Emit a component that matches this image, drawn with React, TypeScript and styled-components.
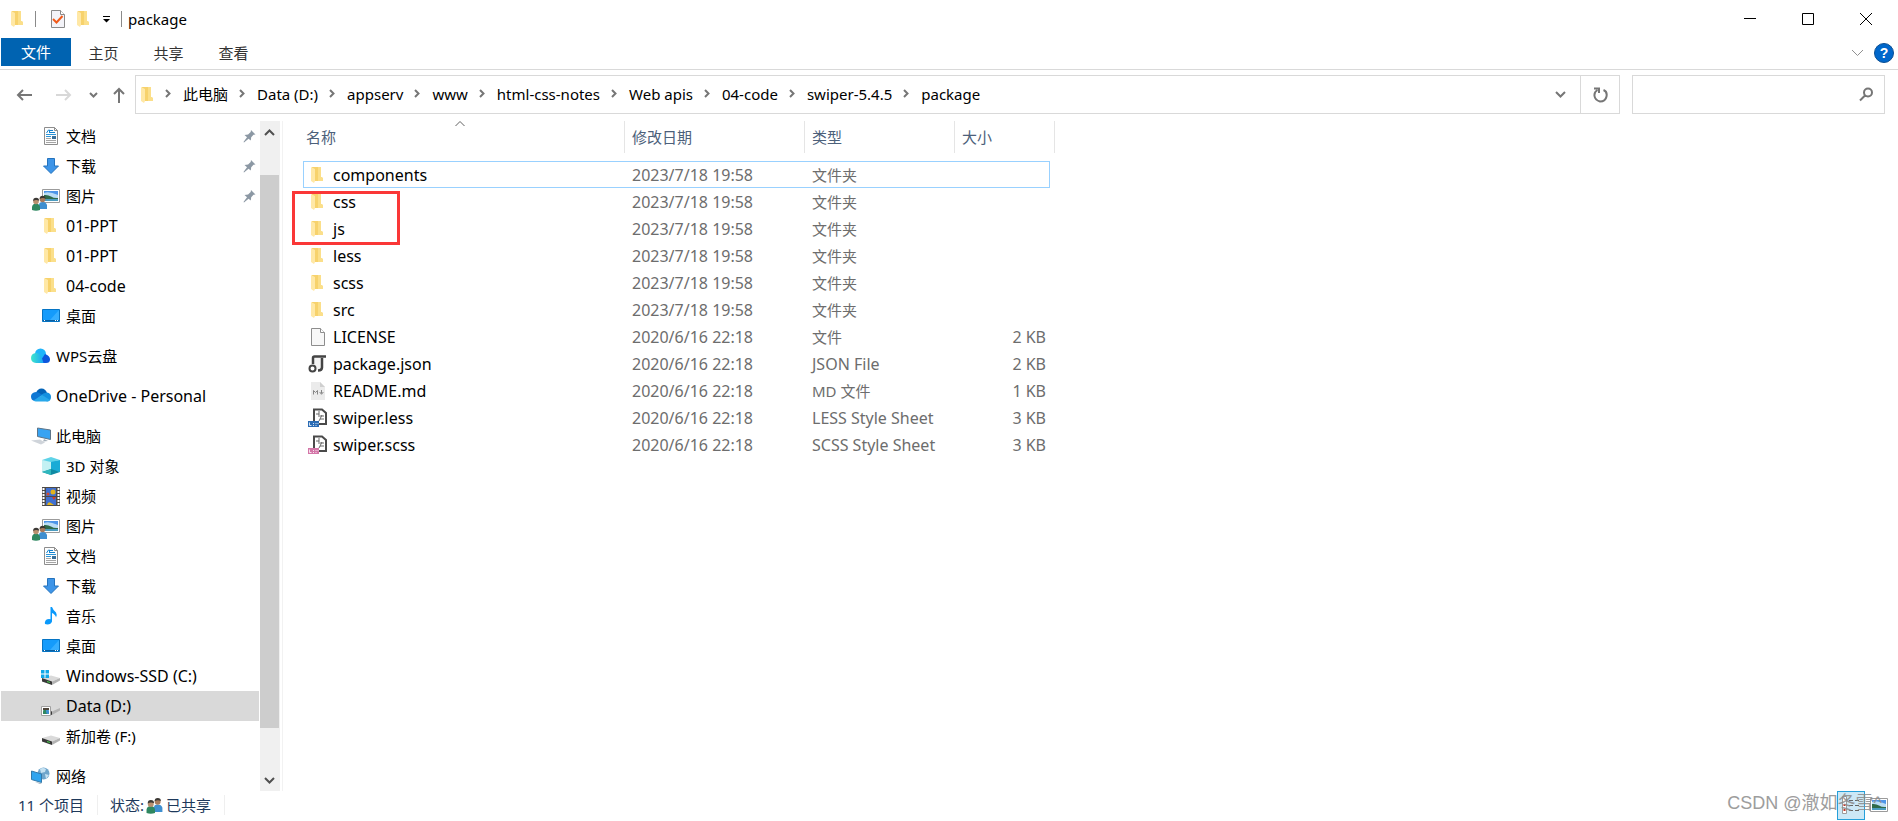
import React from 'react';
import styled, { createGlobalStyle, css } from 'styled-components';

const Global = createGlobalStyle`
  *, *::before, *::after { box-sizing: border-box; }
  html, body, #root { height: 100%; }
  body {
    margin: 0;
    background: #fff;
    color: #000;
    font: 15px/20px "Noto Sans", "Noto Sans CJK SC", sans-serif;
  }
  button, input {
    margin: 0;
    padding: 0;
    border: 0;
    background: none;
    font: inherit;
    color: inherit;
  }
  a { color: inherit; text-decoration: none; }
`;

const Window = styled.div`
  display: flex;
  flex-direction: column;
  height: 100vh;
  min-height: 480px;
  overflow: hidden;
`;

const TitleBar = styled.header`
  display: flex;
  align-items: center;
  height: 38px;
  padding-left: 8px;
`;

const QuickTools = styled.div`
  display: flex;
  align-items: center;
  gap: 6px;
`;

const QuickButton = styled.button<{ $narrow?: boolean }>`
  display: flex;
  align-items: center;
  justify-content: center;
  width: ${p => (p.$narrow ? 14 : 20)}px;
  height: 24px;
`;

const Rule = styled.span`
  width: 1px;
  height: 16px;
  margin: 0 6px 0 1px;
  background: #8a8a8a;
`;

const Title = styled.h1`
  flex: 1;
  margin: 0;
  font-size: 15px;
  font-weight: 400;
  line-height: 20px;
`;

const Caption = styled.button`
  display: flex;
  align-items: center;
  justify-content: center;
  width: 58px;
  height: 38px;
`;

const Captions = styled.div`
  display: flex;
  padding-right: 3px;
`;

const Ribbon = styled.nav`
  display: flex;
  align-items: flex-start;
  height: 32px;
  padding-left: 1px;
  border-bottom: 1px solid #d9d9d9;
`;

const RibbonTab = styled.button<{ $active?: boolean }>`
  height: 28px;
  width: 65px;
  padding-top: 2px;
  color: #333;
  ${p => p.$active && css`
    width: 70px;
    padding-top: 0;
    color: #fff;
    background: #0063b1;
  `}
`;

const RibbonEnd = styled.div`
  display: flex;
  align-items: center;
  gap: 10px;
  height: 30px;
  margin-left: auto;
  padding-right: 4px;
  & button { display: flex; }
`;

const AddressRow = styled.div`
  display: flex;
  align-items: center;
  height: 49px;
  padding: 0 13px 0 16px;
`;

const NavButtons = styled.div`
  display: flex;
  align-items: center;
  width: 119px;
`;

const NavButton = styled.button<{ $w: number }>`
  display: flex;
  align-items: center;
  width: ${p => p.$w}px;
  height: 24px;
`;

const AddressBox = styled.div`
  display: flex;
  flex: 1;
  align-items: center;
  height: 39px;
  border: 1px solid #d9d9d9;
  padding-left: 4px;
`;

const Crumbs = styled.ol`
  display: flex;
  flex: 1;
  align-items: center;
  margin: 0;
  padding: 0 0 2px;
  list-style: none;
  white-space: nowrap;
`;

const Crumb = styled.li`
  display: flex;
  align-items: center;
  & svg { margin: 0 12px 0 11px; }
`;

const BoxButton = styled.button<{ $ruled?: boolean }>`
  display: flex;
  align-items: center;
  justify-content: center;
  width: 39px;
  height: 37px;
  border-left: ${p => (p.$ruled ? '1px solid #d9d9d9' : '0')};
`;

const SearchBox = styled.label`
  display: flex;
  align-items: center;
  width: 253px;
  height: 39px;
  margin-left: 12px;
  padding: 0 10px;
  border: 1px solid #d9d9d9;
  & input { flex: 1; min-width: 0; outline: none; }
`;

const Body = styled.div`
  display: flex;
  flex: 1;
  min-height: 0;
  padding-top: 2px;
`;

const Sidebar = styled.nav`
  flex: none;
  width: 259px;
  padding-left: 1px;
  overflow: hidden;
`;

const Group = styled.ul`
  margin: 0 0 10px;
  padding: 0;
  list-style: none;
`;

const TreeItem = styled.a<{ $selected?: boolean }>`
  display: flex;
  align-items: center;
  height: 30px;
  padding: 0 3px 0 30px;
  background: ${p => (p.$selected ? '#d9d9d9' : 'transparent')};
`;

const TreeIcon = styled.span<{ $depth: number }>`
  display: flex;
  justify-content: flex-end;
  width: ${p => (p.$depth ? 29 : 20)}px;
  margin-right: ${p => (p.$depth ? 6 : 5)}px;
`;

const TreeLabel = styled.span<{ $latin: boolean }>`
  flex: 1;
  font-size: ${p => (p.$latin ? 16 : 15)}px;
  white-space: nowrap;
`;

const Scrollbar = styled.div`
  display: flex;
  flex: none;
  flex-direction: column;
  width: 20px;
  margin-left: 1px;
  background: #f0f0f0;
`;

const ScrollButton = styled.button`
  display: flex;
  align-items: center;
  justify-content: center;
  width: 19px;
  height: 22px;
`;

const Track = styled.div`
  flex: 1;
  padding: 32px 1px 41px 0;
`;

const Thumb = styled.div`
  height: 100%;
  background: #cdcdcd;
`;

const Content = styled.main`
  flex: 1;
  position: relative;
  margin-left: 2px;
  padding-left: 20px;
  border-left: 1px solid #f2f2f2;
  overflow: hidden;
`;

const FileTable = styled.table`
  width: 752px;
  table-layout: fixed;
  border-collapse: separate;
  border-spacing: 0;
  white-space: nowrap;
`;

const Column = styled.col<{ $w: number }>`
  width: ${p => p.$w}px;
`;

const HeadCell = styled.th`
  position: relative;
  height: 32px;
  padding: 0 7px;
  border-right: 1px solid #e5e5e5;
  color: #4c607a;
  font-weight: 400;
  text-align: left;
  &:first-child { padding-left: 3px; }
`;

const SortMark = styled.span`
  position: absolute;
  top: 0;
  left: 49%;
  display: flex;
  transform: translateX(-50%);
`;

const HeadGap = styled.tbody`
  & td { height: 8px; padding: 0; }
`;

const FileRow = styled.tr<{ $focused?: boolean }>`
  height: 27px;
  & td { border: 0 solid transparent; }
  & td:first-child { border-left-width: 1px; }
  ${p => p.$focused && css`
    & td { border-color: #99d1ff; border-width: 1px 0; }
    & td:nth-child(4) { border-right-width: 1px; }
    & td:last-child { border-width: 0; }
  `}
`;

const Cell = styled.td<{ $num?: boolean; $latin?: boolean }>`
  height: 27px;
  padding: 0 ${p => (p.$num ? 4 : 7)}px;
  color: #6d6d6d;
  font-size: ${p => (p.$latin ? 16 : 15)}px;
  text-align: ${p => (p.$num ? 'right' : 'left')};
`;

const NameCell = styled(Cell)`
  padding: 0 0 0 3px;
  color: #000;
  & a { display: flex; align-items: center; gap: 6px; }
`;

const Gutter = styled.td`
  padding: 0;
`;

const Highlight = styled.div`
  position: absolute;
  top: 70px;
  left: 9px;
  width: 108px;
  height: 54px;
  border: 3px solid #fa3737;
`;

const FileIconSlot = styled.span`
  display: flex;
  width: 20px;
  justify-content: flex-end;
`;

const StatusBar = styled.footer`
  position: relative;
  display: flex;
  align-items: center;
  height: 30px;
  padding: 0 10px 2px 18px;
  color: #1e395b;
`;

const StatusPart = styled.span`
  display: flex;
  align-items: center;
  padding-right: 13px;
  margin-right: 12px;
  border-right: 1px solid #efefef;
`;

const Views = styled.div`
  display: flex;
  align-items: center;
  margin-left: auto;
  gap: 5px;
`;

const ViewButton = styled.button<{ $on?: boolean }>`
  display: flex;
  align-items: center;
  justify-content: center;
  ${p => p.$on && css`
    width: 28px;
    height: 29px;
    border: 1px solid #26a0da;
    background: #cce8f6;
  `}
`;

const Watermark = styled.span`
  position: absolute;
  right: 16px;
  bottom: 6px;
  color: #8c8c8c;
  font: 18px/24px "Liberation Sans", "Noto Sans CJK SC", sans-serif;
  opacity: 0.85;
`;

const Folder = ({ compact }: { compact?: boolean }) => (
  <svg width={compact ? 14 : 18} height="18" viewBox={compact ? '0 0 14 18' : '-1 0 18 18'} aria-hidden>
    <path d="M2 1h9v10l2 1v3H2z" fill="#f7d26c" />
    <path d="M8 1h3v10l2 1v3H8z" fill="#fbdf8a" />
    <path d="M1 1l4 2v12l-1 2-3-2z" fill="#ffe8a6" />
  </svg>
);

const Page = () => (
  <svg width="18" height="18" viewBox="-1 0 18 18" aria-hidden>
    <path d="M1.500 .5h9l4 4v13h-13z" fill="#f7f7f7" stroke="#8d8d8d" />
    <path d="M10.500 .5v4h4" fill="#fff" stroke="#8d8d8d" />
  </svg>
);

const Checked = () => (
  <svg width="16" height="18" viewBox="0 0 16 18" aria-hidden>
    <path d="M1.500 .5h9l4 4v13h-13z" fill="#f3f3f8" stroke="#8a8a8a" />
    <path d="M10.500 .5v4h4" fill="#fff" stroke="#8a8a8a" />
    <path d="M3 9l3.500 3.500L12.500 6" fill="none" stroke="#f05a1a" strokeWidth="2" />
  </svg>
);

const Doc = () => (
  <svg width="18" height="18" viewBox="-1 0 18 18" aria-hidden>
    <path d="M1.500 .5h10l3 3v14h-13z" fill="#fdfdfd" stroke="#8d8d8d" />
    <path d="M11.500 .5v3h3" fill="none" stroke="#8d8d8d" />
    <path d="M3.500 6L5.500 3h1v3M7 3.500h3M7 5.500h5" fill="none" stroke="#1583cf" />
    <path d="M3 7.500h10M3 9.500h5" stroke="#2a94d8" />
    <path d="M3 11.500h5M3 13.500h10M3 15.500h10" stroke="#a5a5a5" />
    <path d="M9 9h4v3H9z" fill="#3a6f9a" />
  </svg>
);

const Download = () => (
  <svg width="18" height="18" viewBox="0 0 18 18" aria-hidden>
    <path d="M5.500 1.500h7V9h4L9 16.500 1.500 9h4z" fill="#3e95e8" stroke="#2473bd" />
  </svg>
);

const People = () => (
  <>
    <path d="M7 20v-4q0-3 3.500-3t4.500 3v4z" fill="#3f8fd0" />
    <circle cx="10.500" cy="10.500" r="2.800" fill="#a87b5c" />
    <path d="M7.600 10q0-3.200 3-3.200t3 3q-3-1.500-6 .2z" fill="#3c3935" />
    <path d="M0 21v-3q.5-3.500 4-3.500t4 3.500v3q-4 1.500-8 0z" fill="#2f8760" />
    <circle cx="4" cy="12.500" r="2.800" fill="#b9906f" />
    <path d="M1.100 12q0-3.200 3-3.200t3 3q-3-1.500-6 .2z" fill="#3c3935" />
  </>
);

const Photo = () => (
  <>
    <path d="M.5.5h17v13H.5z" fill="#fff" stroke="#9b9b9b" />
    <path d="M2 2h14v10H2z" fill="#4c95e8" />
    <path d="M2 4q5-2 14 2v3H2z" fill="#b9dcf5" />
    <path d="M2 6q4-.5 7 1.500t7 1.500v1H2z" fill="#2f6b4a" />
    <path d="M2 10h14v2H2z" fill="#4b9cc0" />
  </>
);

const Pictures = () => (
  <svg width="29" height="30" viewBox="0 -8 29 30" aria-hidden>
    <g transform="translate(11 0)"><Photo /></g>
    <g transform="translate(1 0)"><People /></g>
  </svg>
);

const Desktop = () => (
  <svg width="18" height="14" viewBox="0 0 18 14" aria-hidden>
    <path d="M.5.5h17v12H.5z" fill="#149bfb" stroke="#0574c4" />
    <path d="M1 11.500h16" stroke="#0b5e9f" />
    <path d="M2 11.500h1M13 11.500h1M15 11.500h1" stroke="#fff" />
    <path d="M17 1v10L8 11z" fill="#35aeff" />
  </svg>
);

const WpsCloud = () => (
  <svg width="20" height="16" viewBox="0 0 20 16" aria-hidden>
    <defs>
      <linearGradient id="wps-left" x1="0" y1="0" x2="1" y2="0">
        <stop offset="0" stopColor="#3fe6cc" />
        <stop offset="1" stopColor="#1aa5f6" />
      </linearGradient>
    </defs>
    <circle cx="9.500" cy="6" r="5.500" fill="#1fb4fa" />
    <path d="M8 15l6-9q5 1.500 5 5.500 0 3.500-4 3.500z" fill="#0d56dc" />
    <path d="M5 5q4 0 5.500 4l2 6H5q-5-.5-5-5t5-5z" fill="url(#wps-left)" />
  </svg>
);

const OneDrive = () => (
  <svg width="20" height="16" viewBox="0 0 20 16" aria-hidden>
    <path d="M5 5q1.500-4.500 5.500-4.500T16 5l-4 4z" fill="#0364b8" />
    <path d="M5 4q3 0 6 3l-7 6Q0 12.500 0 8.500T5 4z" fill="#0f78d4" />
    <path d="M10 7q3-2.500 6-2.500 4 .5 4 4.500t-4 4.500l-5-3z" fill="#1490df" />
    <path d="M2.500 12.500L11 7l8 5q-1 1.500-3 1.500H5q-1.500 0-2.500-1z" fill="#28a8ea" />
  </svg>
);

const Computer = () => (
  <svg width="20" height="18" viewBox="0 0 20 18" aria-hidden>
    <path d="M6.500 1l13 2v9.500l-13-3z" fill="#38a3f2" stroke="#5d7488" />
    <path d="M13 12l-1 2.500 5-.5" fill="#a5b0ba" />
    <path d="M0 13.500l9-1 5 3-4 2z" fill="#cfd4da" />
  </svg>
);

const Cube = () => (
  <svg width="18" height="18" viewBox="0 0 18 18" aria-hidden>
    <path d="M0 3l9 1v10l-9 1z" fill="#c3f1f3" />
    <path d="M18 3L9 4v10l9 1z" fill="#1aabd6" />
    <path d="M9 0l9 3-9 2-9-2z" fill="#5fd3e8" />
    <path d="M0 15l9-3 9 3-9 3z" fill="#0f8aa3" />
    <path d="M0 15l9-3v6z" fill="#2fb7bd" />
  </svg>
);

const Film = () => (
  <svg width="18" height="19" viewBox="0 0 18 19" aria-hidden>
    <path d="M0 0h18v19H0z" fill="#4c4947" />
    <path d="M1.500 1v18M16.500 1v18" stroke="#fff" strokeWidth="2" strokeDasharray="2 1" />
    <path d="M4 1h10v8H4zM4 10h10v8H4z" fill="#3f6fd0" />
    <circle cx="11" cy="5" r="2.500" fill="#e2b21c" />
    <circle cx="6" cy="7" r="1.500" fill="#d84a2b" />
    <path d="M10 10h4l-2 3z" fill="#d33b22" />
    <path d="M5 18q1-4 4-2l3 2z" fill="#e2b21c" />
  </svg>
);

const Note = () => (
  <svg width="18" height="18" viewBox="-2 0 18 18" aria-hidden>
    <path d="M6.500 0h1.500q1 3 4 5.500 1.500 2.500 0 5-.5-3-4-4.500v8.500q-1 3-4.500 3T1 15q.5-3 4-3l1.500.2z" fill="#0a99fb" />
  </svg>
);

const DiskBody = () => (
  <>
    <path d="M0 12l9-2.500 9 2.500-8 3.500z" fill="#dadada" />
    <path d="M0 12l10 3.500V19L0 15.500z" fill="#393939" />
    <path d="M10 15.500l8-3.500v2.500L10 19z" fill="#b3b3b3" />
    <path d="M5 15.500l3 1" stroke="#45d34a" />
  </>
);

const Disk = ({ kind }: { kind: 'windows' | 'shared' | 'plain' }) => (
  <svg width="20" height="20" viewBox="0 0 20 20" aria-hidden>
    <g transform="translate(2 0)"><DiskBody /></g>
    {kind === 'windows' && (
      <path d="M1 4h3.500v3.500H1zM5.500 4H9v3.500H5.500zM1 8.500h3.500V12H1zM5.500 8.500H9V12H5.500z" fill="#10a8e8" />
    )}
    {kind === 'shared' && (
      <>
        <path d="M1.500 10.500h9v9h-9z" fill="#fff" stroke="#a0a0a0" />
        <path d="M3 16q0-3 2-3t2 3v2H3z" fill="#2f8760" />
        <path d="M6 16q0-3 1.500-3T9 16v2H7z" fill="#3f8fd0" />
        <path d="M3 12h6v2H3z" fill="#4f463c" />
      </>
    )}
  </svg>
);

const Network = () => (
  <svg width="20" height="18" viewBox="0 0 20 18" aria-hidden>
    <circle cx="12.500" cy="6.500" r="6" fill="#6fa5cb" />
    <path d="M9 2q3-2 6 0l-1 3-4 1zM14 7l4 1-3 4z" fill="#c6e2f2" />
    <path d="M.5 4l10 3v8.500l-10-3z" fill="#2fa4ef" stroke="#3279aa" />
    <path d="M4 15l5 2 2-1z" fill="#9db0be" />
  </svg>
);

const Pin = () => (
  <svg width="13" height="14" viewBox="0 0 13 14" aria-hidden>
    <path d="M8 1l4.500 4.500-2 .2-2.300 2.500-.4 3.300L5.500 9.700 1 13.500l-.5-.5L4 8.200 1.500 6l3.600-.4L7.700 3z" fill="#8c98a4" />
  </svg>
);

const JsonIcon = () => (
  <svg width="19" height="18" viewBox="0 0 19 18" aria-hidden>
    <path d="M5.500 1h8v14h-8z" fill="#f4f4f4" />
    <path d="M5 9V3q0-1.500 1.500-1.500H18" fill="none" stroke="#444" strokeWidth="2.500" />
    <path d="M14 3v9.500q0 3-4 3" fill="none" stroke="#444" strokeWidth="2.500" />
    <circle cx="4.500" cy="13.500" r="3" fill="#fff" stroke="#444" strokeWidth="2" />
  </svg>
);

const glyphFont = '"Liberation Sans", sans-serif';

const MdIcon = () => (
  <svg width="18" height="18" viewBox="-1 0 18 18" aria-hidden>
    <path d="M1 0h9l5 5v13H1z" fill="#ebebeb" />
    <path d="M10 0v5h5z" fill="#cfcfcf" />
    <path d="M3.500 12.500V8.500l2 2 2-2v4M11.500 8v3.500M9.700 10l1.800 2.300 1.800-2.300" fill="none" stroke="#858585" />
  </svg>
);

const SheetIcon = ({ tint }: { tint: string }) => (
  <svg width="20" height="20" viewBox="0 0 20 20" aria-hidden>
    <path d="M7 13V1.500h8L19 5v11h-7" fill="#fff" stroke="#4a4a4a" strokeWidth="2" />
    <path d="M9 6h3M12 3v6M13 8h4M13 11h4M12 13l3-6" stroke="#6a6a6a" />
    <path d="M1 13h11v6H1z" fill={tint} />
    <path d="M2.500 14.500v3h2M6 15.500h1M6 17.500h1M8.500 15.500h1M8.500 17.500h1M10.500 15.500h1" fill="none" stroke="#fff" strokeOpacity=".8" />
  </svg>
);

const Arrow = ({ d, tone, w = 16, h = 16, sw = 2 }: { d: string; tone: string; w?: number; h?: number; sw?: number }) => (
  <svg width={w} height={h} viewBox={`0 0 ${w} ${h}`} fill="none" stroke={tone} strokeWidth={sw} aria-hidden>
    <path d={d} />
  </svg>
);

type Node = { label: string; icon: React.ReactNode; depth?: number; pinned?: boolean; selected?: boolean };

const tree: Node[][] = [
  [
    { label: '文档', icon: <Doc />, depth: 1, pinned: true },
    { label: '下载', icon: <Download />, depth: 1, pinned: true },
    { label: '图片', icon: <Pictures />, depth: 1, pinned: true },
    { label: '01-PPT', icon: <Folder />, depth: 1 },
    { label: '01-PPT', icon: <Folder />, depth: 1 },
    { label: '04-code', icon: <Folder />, depth: 1 },
    { label: '桌面', icon: <Desktop />, depth: 1 },
  ],
  [{ label: 'WPS云盘', icon: <WpsCloud /> }],
  [{ label: 'OneDrive - Personal', icon: <OneDrive /> }],
  [
    { label: '此电脑', icon: <Computer /> },
    { label: '3D 对象', icon: <Cube />, depth: 1 },
    { label: '视频', icon: <Film />, depth: 1 },
    { label: '图片', icon: <Pictures />, depth: 1 },
    { label: '文档', icon: <Doc />, depth: 1 },
    { label: '下载', icon: <Download />, depth: 1 },
    { label: '音乐', icon: <Note />, depth: 1 },
    { label: '桌面', icon: <Desktop />, depth: 1 },
    { label: 'Windows-SSD (C:)', icon: <Disk kind="windows" />, depth: 1 },
    { label: 'Data (D:)', icon: <Disk kind="shared" />, depth: 1, selected: true },
    { label: '新加卷 (F:)', icon: <Disk kind="plain" />, depth: 1 },
  ],
  [{ label: '网络', icon: <Network /> }],
];

const folders = ['components', 'css', 'js', 'less', 'scss', 'src'];
const files = [
  ...folders.map(name => ({ name, icon: <Folder />, date: '2023/7/18 19:58', type: '文件夹', size: '' })),
  { name: 'LICENSE', icon: <Page />, date: '2020/6/16 22:18', type: '文件', size: '2 KB' },
  { name: 'package.json', icon: <JsonIcon />, date: '2020/6/16 22:18', type: 'JSON File', size: '2 KB' },
  { name: 'README.md', icon: <MdIcon />, date: '2020/6/16 22:18', type: 'MD 文件', size: '1 KB' },
  { name: 'swiper.less', icon: <SheetIcon tint="#2b6cb5" />, date: '2020/6/16 22:18', type: 'LESS Style Sheet', size: '3 KB' },
  { name: 'swiper.scss', icon: <SheetIcon tint="#d476a8" />, date: '2020/6/16 22:18', type: 'SCSS Style Sheet', size: '3 KB' },
];

const path = ['此电脑', 'Data (D:)', 'appserv', 'www', 'html-css-notes', 'Web apis', '04-code', 'swiper-5.4.5', 'package'];

// Latin-only strings are set one size up so they balance with the Chinese labels.
const isLatin = (text: string) => /^[\x20-\x7e]*$/.test(text);

export default function App() {
  return (
    <Window>
      <Global />
      <TitleBar>
        <QuickTools>
          <QuickButton aria-label="Window menu"><Folder /></QuickButton>
          <Rule />
          <QuickButton aria-label="Properties"><Checked /></QuickButton>
          <QuickButton aria-label="New folder"><Folder /></QuickButton>
          <QuickButton $narrow aria-label="Customize toolbar">
            <svg width="8" height="8" viewBox="0 0 8 8" aria-hidden>
              <path d="M0 1.500h7" stroke="#000" strokeWidth="1" />
              <path d="M0 4h7L3.500 7.500z" fill="#000" />
            </svg>
          </QuickButton>
          <Rule />
        </QuickTools>
        <Title>package</Title>
        <Captions>
          <Caption aria-label="Minimize"><Arrow d="M0 5.500h12" tone="#000" w={12} h={12} sw={1} /></Caption>
          <Caption aria-label="Maximize"><Arrow d="M.5.5h11v11H.5z" tone="#000" w={12} h={12} sw={1} /></Caption>
          <Caption aria-label="Close"><Arrow d="M0 0l12 12M12 0L0 12" tone="#000" w={12} h={12} sw={1} /></Caption>
        </Captions>
      </TitleBar>

      <Ribbon>
        <RibbonTab $active>文件</RibbonTab>
        <RibbonTab>主页</RibbonTab>
        <RibbonTab>共享</RibbonTab>
        <RibbonTab>查看</RibbonTab>
        <RibbonEnd>
          <button aria-label="Expand ribbon"><Arrow d="M1 1l5.500 5.500L12 1" tone="#909090" w={13} h={8} sw={1} /></button>
          <button aria-label="Help">
            <svg width="20" height="20" viewBox="0 0 20 20" aria-hidden>
              <circle cx="10" cy="10" r="9.500" fill="#0067cb" stroke="#0b4f93" />
              <text x="10" y="15" textAnchor="middle" fill="#fff" fontSize="14" fontWeight="700" fontFamily={glyphFont}>?</text>
            </svg>
          </button>
        </RibbonEnd>
      </Ribbon>

      <AddressRow>
        <NavButtons>
          <NavButton $w={40} aria-label="Back"><Arrow d="M16 8H2M7 3L2 8l5 5" tone="#767676" /></NavButton>
          <NavButton $w={33} aria-label="Forward"><Arrow d="M0 8h14M9 3l5 5-5 5" tone="#d8d8d8" /></NavButton>
          <NavButton $w={24} aria-label="Recent"><Arrow d="M1 1l3.500 3.500L8 1" tone="#767676" w={9} h={6} /></NavButton>
          <NavButton $w={16} aria-label="Up"><Arrow d="M6 16V2M1 7l5-5 5 5" tone="#767676" w={12} /></NavButton>
        </NavButtons>
        <AddressBox>
          <Folder compact />
          <Crumbs>
            {path.map(part => (
              <Crumb key={part}>
                <Arrow d="M1 1l3.500 3.500L1 8" tone="#767676" w={6} h={9} />
                <a href="#">{part}</a>
              </Crumb>
            ))}
          </Crumbs>
          <BoxButton aria-label="Previous locations"><Arrow d="M1 1l4.500 4.500L10 1" tone="#767676" w={11} h={7} /></BoxButton>
          <BoxButton $ruled aria-label="Refresh"><Arrow d="M4.500 3q-3.500 2-3 6t5.500 5.500q5.500 0 6.500-5t-3-6.500M1 1.500h5V6" tone="#767676" w={15} /></BoxButton>
        </AddressBox>
        <SearchBox>
          <input type="search" aria-label="Search" />
          <Arrow d="M13 5.500a4 4 0 1 0-8 0 4 4 0 1 0 8 0M6 8.500L1 13.500" tone="#767676" w={15} h={15} />
        </SearchBox>
      </AddressRow>

      <Body>
        <Sidebar>
          {tree.map((group, i) => (
            <Group key={i}>
              {group.map((n, j) => (
                <li key={j}>
                  <TreeItem href="#" $selected={n.selected}>
                    <TreeIcon $depth={n.depth ?? 0}>{n.icon}</TreeIcon>
                    <TreeLabel $latin={isLatin(n.label)}>{n.label}</TreeLabel>
                    {n.pinned && <Pin />}
                  </TreeItem>
                </li>
              ))}
            </Group>
          ))}
        </Sidebar>
        <Scrollbar>
          <ScrollButton aria-label="Scroll up"><Arrow d="M1 6l4.500-4.500L10 6" tone="#505050" w={11} h={7} /></ScrollButton>
          <Track><Thumb /></Track>
          <ScrollButton aria-label="Scroll down"><Arrow d="M1 1l4.500 4.500L10 1" tone="#505050" w={11} h={7} /></ScrollButton>
        </Scrollbar>
        <Content>
          <FileTable>
            <colgroup>
              <Column $w={322} />
              <Column $w={180} />
              <Column $w={150} />
              <Column $w={95} />
              <Column $w={5} />
            </colgroup>
            <thead>
              <tr>
                <HeadCell>名称<SortMark><Arrow d="M.5 5L5 .5 9.500 5" tone="#606060" w={10} h={6} sw={1} /></SortMark></HeadCell>
                <HeadCell>修改日期</HeadCell>
                <HeadCell>类型</HeadCell>
                <HeadCell colSpan={2}>大小</HeadCell>
              </tr>
            </thead>
            <HeadGap><tr><td colSpan={5} /></tr></HeadGap>
            <tbody>
              {files.map((f, i) => (
                <FileRow key={f.name} $focused={i === 0}>
                  <NameCell $latin><a href="#"><FileIconSlot>{f.icon}</FileIconSlot>{f.name}</a></NameCell>
                  <Cell $latin>{f.date}</Cell>
                  <Cell $latin={isLatin(f.type)}>{f.type}</Cell>
                  <Cell $num $latin>{f.size}</Cell>
                  <Gutter />
                </FileRow>
              ))}
            </tbody>
          </FileTable>
          <Highlight />
        </Content>
      </Body>

      <StatusBar>
        <StatusPart>11 个项目</StatusPart>
        <StatusPart>
          状态:
          <svg width="22" height="18" viewBox="-2 5 20 17" aria-hidden><People /></svg>
          已共享
        </StatusPart>
        <Views>
          <ViewButton $on aria-label="Details view">
            <svg width="18" height="20" viewBox="0 0 18 20" aria-hidden>
              <path d="M.5 1.500h4v17h-4z" fill="#fff" stroke="#9b9b9b" />
              <path d="M1.500 10h2M1.500 15h2" stroke="#c0392b" strokeWidth="2" />
              <path d="M7 5.500h4M13 5.500h4M7 10.500h4M13 10.500h4M7 15.500h4M13 15.500h4" stroke="#666" />
            </svg>
          </ViewButton>
          <ViewButton aria-label="Large icons view">
            <svg width="18" height="14" viewBox="0 0 18 14" aria-hidden><Photo /></svg>
          </ViewButton>
        </Views>
        <Watermark>CSDN @澈如冬雪^</Watermark>
      </StatusBar>
    </Window>
  );
}
